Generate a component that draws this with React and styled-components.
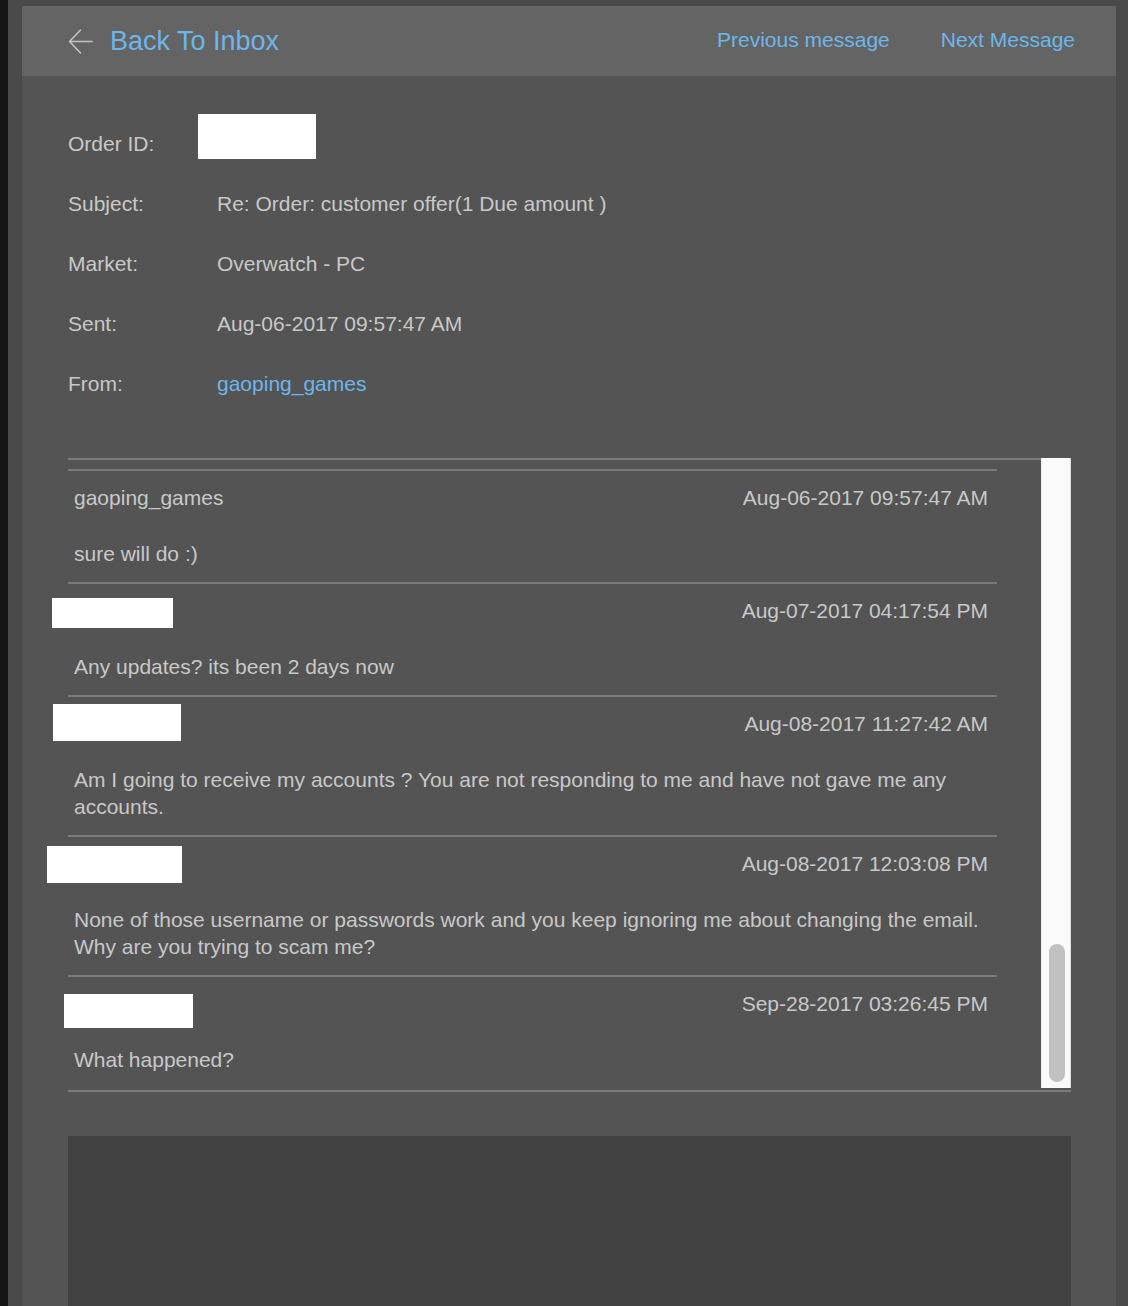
import React from 'react';
import styled, { createGlobalStyle } from 'styled-components';

const GlobalStyle = createGlobalStyle`
  html, body {
    margin: 0;
    padding: 0;
    background: #4a4a4a;
  }
  body {
    font-family: "Liberation Sans", Arial, Helvetica, sans-serif;
  }
  * { box-sizing: border-box; }
`;

const meta = [
  { label: 'Order ID:', redact: { x: -19, y: 0, w: 118, h: 45 } },
  { label: 'Subject:', value: 'Re: Order: customer offer(1 Due amount )' },
  { label: 'Market:', value: 'Overwatch - PC' },
  { label: 'Sent:', value: 'Aug-06-2017 09:57:47 AM' },
  { label: 'From:', value: 'gaoping_games', link: true },
];

// redact = white box pasted over the buyer's name
const messages = [
  { from: 'gaoping_games', date: 'Aug-06-2017 09:57:47 AM', text: 'sure will do :)' },
  {
    redact: { x: -22, y: 0, w: 121, h: 30 },
    date: 'Aug-07-2017 04:17:54 PM',
    text: 'Any updates? its been 2 days now',
  },
  {
    redact: { x: -21, y: -7, w: 128, h: 37 },
    date: 'Aug-08-2017 11:27:42 AM',
    text: 'Am I going to receive my accounts ? You are not responding to me and have not gave me any accounts.',
  },
  {
    redact: { x: -27, y: -5, w: 135, h: 37 },
    date: 'Aug-08-2017 12:03:08 PM',
    text: 'None of those username or passwords work and you keep ignoring me about changing the email. Why are you trying to scam me?',
  },
  {
    redact: { x: -10, y: 3, w: 129, h: 34 },
    date: 'Sep-28-2017 03:26:45 PM',
    text: 'What happened?',
  },
];

const ArrowLeft = () => (
  <svg width="26" height="26" viewBox="0 0 26 26" fill="none">
    <path
      d="M24 12.5H1.5M12.5 1L1.5 12.5L12.5 24"
      stroke="#c2c2c2"
      strokeWidth="1.6"
      strokeLinecap="round"
      strokeLinejoin="round"
    />
  </svg>
);

export default function App() {
  return (
    <>
      <GlobalStyle />
      <Page>
        <TopBar>
          <BackLink href="#">
            <ArrowLeft />
            <span>Back To Inbox</span>
          </BackLink>
          <NavLinks>
            <NavLink href="#">Previous message</NavLink>
            <NavLink href="#">Next Message</NavLink>
          </NavLinks>
        </TopBar>

        <Panel>
          <MetaList>
            {meta.map((m) => (
              <MetaRow key={m.label}>
                <span>{m.label}</span>
                <MetaValue $link={m.link}>
                  {m.value}
                  {m.redact && (
                    <Redact $x={m.redact.x} $y={m.redact.y} $w={m.redact.w} $h={m.redact.h} />
                  )}
                </MetaValue>
              </MetaRow>
            ))}
          </MetaList>

          <Thread>
            <MessageList>
              {messages.map((msg, i) => (
                <Message key={i}>
                  <MessageHead>
                    <Sender>
                      {msg.from}
                      {msg.redact && (
                        <Redact
                          $x={msg.redact.x}
                          $y={msg.redact.y}
                          $w={msg.redact.w}
                          $h={msg.redact.h}
                        />
                      )}
                    </Sender>
                    <span>{msg.date}</span>
                  </MessageHead>
                  <MessageBody>{msg.text}</MessageBody>
                </Message>
              ))}
            </MessageList>
            <ScrollTrack>
              <ScrollThumb />
            </ScrollTrack>
          </Thread>

          <Reply aria-label="Reply" />
        </Panel>
      </Page>
    </>
  );
}

const Page = styled.div`
  min-height: 100vh;
  border-left: 8px solid #141414;
  padding: 6px 12px 0 14px;
  background: #4a4a4a;
  display: flex;
  flex-direction: column;
`;

const TopBar = styled.header`
  height: 70px;
  background: #646464;
  display: flex;
  align-items: center;
  justify-content: space-between;
  padding: 0 41px 0 46px;
`;

const BackLink = styled.a`
  display: flex;
  align-items: center;
  gap: 16px;
  color: #6db6ea;
  font-size: 27px;
  text-decoration: none;
  svg {
    display: block;
    margin-top: 1px;
  }
`;

const NavLinks = styled.nav`
  display: flex;
  align-items: center;
  gap: 51px;
  margin-top: -3px;
`;

const NavLink = styled.a`
  color: #6db6ea;
  font-size: 21px;
  text-decoration: none;
`;

const Panel = styled.main`
  flex: 1;
  background: #545454;
  padding: 38px 45px 0 46px;
`;

const MetaList = styled.div`
  display: flex;
  flex-direction: column;
`;

const MetaRow = styled.div`
  display: grid;
  grid-template-columns: 149px 1fr;
  height: 60px;
  line-height: 60px;
  font-size: 21px;
  color: #c8c8c8;
`;

const MetaValue = styled.span`
  position: relative;
  color: ${(p) => (p.$link ? '#6db6ea' : '#c8c8c8')};
`;

const Redact = styled.span`
  position: absolute;
  left: ${(p) => p.$x}px;
  top: ${(p) => p.$y}px;
  width: ${(p) => p.$w}px;
  height: ${(p) => p.$h}px;
  background: #ffffff;
`;

const Thread = styled.section`
  display: flex;
  height: 634px;
  margin-top: 44px;
  padding-bottom: 2px;
  border-bottom: 2px solid #7a7a7a;
`;

const MessageList = styled.div`
  flex: 1;
  min-width: 0;
  border-top: 2px solid #7a7a7a;
  display: flex;
  flex-direction: column;
  justify-content: flex-end;
`;

const ScrollTrack = styled.div`
  width: 30px;
  background: #fafafa;
  border-left: 1px solid #ececec;
  border-right: 1px solid #dcdcdc;
  display: flex;
  flex-direction: column;
  justify-content: flex-end;
  padding: 0 5px 6px 7px;
`;

const ScrollThumb = styled.div`
  height: 138px;
  border-radius: 8px;
  background: #c1c1c1;
`;

const Message = styled.article`
  margin-right: 44px;
  border-top: 2px solid #7a7a7a;
  padding: 14px 9px 15px 6px;
  font-size: 21px;
  color: #c8c8c8;
`;

const MessageHead = styled.div`
  display: flex;
  justify-content: space-between;
  align-items: center;
  height: 26px;
  line-height: 26px;
`;

const Sender = styled.div`
  position: relative;
  height: 26px;
`;

const MessageBody = styled.p`
  margin: 29px 0 0;
  line-height: 27px;
`;

const Reply = styled.textarea`
  display: block;
  width: 100%;
  height: 170px;
  margin-top: 44px;
  background: #414141;
  border: none;
  outline: none;
  resize: none;
  color: #c8c8c8;
  font-family: inherit;
  font-size: 21px;
`;
